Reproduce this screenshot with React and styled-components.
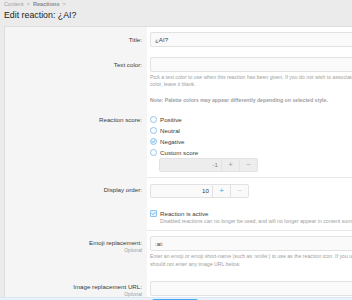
import React from 'react';
import styled, { createGlobalStyle } from 'styled-components';

const Global = createGlobalStyle`
  html, body { margin: 0; padding: 0; overflow: hidden; background: #ebebeb; }
  body { font-family: "Liberation Sans", Arial, sans-serif; color: #141414; width: 352px; height: 300px; font-size: 6px; }
  * { box-sizing: border-box; }
`;

const Page = styled.div`
  width: 620px;
  padding: 0 4px;
`;

const Header = styled.div`
  height: 26px;
  display: flex;
  flex-direction: column;
`;

const Crumbs = styled.div`
  display: flex;
  align-items: center;
  gap: 3px;
  font-size: 5.6px;
  line-height: 8px;
  color: #9a9a9a;
`;

const Crumb = styled.span`
  font-weight: ${(p) => (p.$strong ? 'bold' : 'normal')};
  color: ${(p) => (p.$strong ? '#8a8a8a' : '#a0a0a0')};
`;

const Title = styled.h1`
  margin: 0;
  font-size: 8.8px;
  font-weight: normal;
  line-height: 14px;
  color: #222;
`;

const Block = styled.div`
  background: #fff;
  border: 1px solid #dedede;
  border-right: none;
`;

const Row = styled.div`
  display: grid;
  grid-template-columns: 142px 1fr;
`;

const Label = styled.div`
  background: #f5f5f5;
  text-align: right;
  padding: ${(p) => p.$top}px 5px 0 0;
  font-size: 6.2px;
  line-height: 8px;
  color: #3a3a3a;
`;

const Optional = styled.div`
  font-size: 4.8px;
  line-height: 7px;
  color: #a0a0a0;
`;

const Value = styled.div`
  padding: ${(p) => p.$pt ?? 5}px 4px ${(p) => p.$pb ?? 5}px 3px;
  border-top: ${(p) => (p.$sep ? '1px solid #e8e8e8' : 'none')};
`;

const Input = styled.div`
  height: 15px;
  border: 1px solid #e2e2e2;
  border-radius: 2px;
  background: #fafafa;
  font-size: 6.2px;
  line-height: 13px;
  padding: 0 4px;
  color: #3a3a3a;
`;

const Hint = styled.div`
  margin-top: ${(p) => p.$mt ?? 2}px;
  padding-left: ${(p) => p.$indent ?? 0}px;
  font-size: 5.2px;
  line-height: ${(p) => p.$lh ?? 7}px;
  color: #a0a0a0;
  white-space: nowrap;
  font-weight: ${(p) => (p.$bold ? 'bold' : 'normal')};
`;

const Choice = styled.div`
  display: flex;
  align-items: center;
  height: ${(p) => p.$h ?? 11}px;
  gap: 3px;
  font-size: 6.2px;
  color: #3a3a3a;
`;

const Radio = styled.span`
  width: 7px;
  height: 7px;
  border-radius: 50%;
  border: 1px solid #8fc3ec;
  background: ${(p) => (p.$on ? '#eaf4fc' : '#fff')};
  display: flex;
  align-items: center;
  justify-content: center;
`;

const Check = styled.span`
  width: 7px;
  height: 7px;
  border-radius: 1px;
  border: 1px solid #8fc3ec;
  background: #eaf4fc;
  display: flex;
  align-items: center;
  justify-content: center;
`;

const Spin = styled.div`
  display: flex;
  width: max-content;
  height: 14px;
  margin-left: ${(p) => p.$indent ?? 0}px;
  border: 1px solid #e2e2e2;
  border-radius: 2px;
  background: ${(p) => (p.$disabled ? '#ededed' : '#fafafa')};
  font-size: 6.2px;
`;

const SpinValue = styled.div`
  width: 61px;
  text-align: right;
  padding-right: 3px;
  line-height: 12px;
  color: ${(p) => (p.$disabled ? '#8a8a8a' : '#3a3a3a')};
`;

const SpinBtn = styled.div`
  width: 18px;
  border-left: 1px solid #e2e2e2;
  display: flex;
  align-items: center;
  justify-content: center;
  font-size: 8px;
  line-height: 12px;
  color: ${(p) => p.$color};
`;

const SubmitBar = styled.div`
  position: fixed;
  left: 0;
  right: 0;
  bottom: -20px;
  height: 23px;
  background: #eaf3fb;
  border-top: 1px solid #dbe8f4;
  padding: 1px 0 0 152px;
`;

const Button = styled.div`
  width: 46px;
  height: 18px;
  border-radius: 2px;
  background: #47a7eb;
`;

const Tick = () => (
  <svg width="5" height="5" viewBox="0 0 10 10">
    <path d="M2 5.2 L4.2 7.4 L8 3" fill="none" stroke="#47a7eb" strokeWidth="1.6" strokeLinecap="round" strokeLinejoin="round" />
  </svg>
);

export default function App() {
  return (
    <>
      <Global />
      <Page>
        <Header>
          <Crumbs>
            <Crumb>Content</Crumb>
            <Crumb>&gt;</Crumb>
            <Crumb $strong>Reactions</Crumb>
            <Crumb>&gt;</Crumb>
          </Crumbs>
          <Title>Edit reaction: ¿AI?</Title>
        </Header>
        <Block>
          <Row>
            <Label $top={8.5}>Title:</Label>
            <Value>
              <Input>¿AI?</Input>
            </Value>
          </Row>
          <Row>
            <Label $top={8.5}>Text color:</Label>
            <Value>
              <Input />
              <Hint>
                Pick a text color to use when this reaction has been given. If you do not wish to associate a specific text
                <br />
                color, leave it blank.
              </Hint>
              <Hint $mt={9} $bold>Note: Palette colors may appear differently depending on selected style.</Hint>
            </Value>
          </Row>
          <Row>
            <Label $top={6.5}>Reaction score:</Label>
            <Value>
              <Choice><Radio />Positive</Choice>
              <Choice><Radio />Neutral</Choice>
              <Choice><Radio $on><Tick /></Radio>Negative</Choice>
              <Choice><Radio />Custom score</Choice>
              <Spin $disabled $indent={9}>
                <SpinValue $disabled>-1</SpinValue>
                <SpinBtn $color="#9a9a9a">+</SpinBtn>
                <SpinBtn $color="#b0b0b0">−</SpinBtn>
              </Spin>
            </Value>
          </Row>
          <Row>
            <Label $top={9}>Display order:</Label>
            <Value $sep $pt={6}>
              <Spin>
                <SpinValue>10</SpinValue>
                <SpinBtn $color="#47a7eb">+</SpinBtn>
                <SpinBtn $color="#a9d1f0">−</SpinBtn>
              </Spin>
            </Value>
          </Row>
          <Row>
            <Label $top={5} />
            <Value>
              <Choice $h={10}><Check><Tick /></Check>Reaction is active</Choice>
              <Hint $mt={0} $indent={10}>
                Disabled reactions can no longer be used, and will no longer appear in content summaries.
              </Hint>
            </Value>
          </Row>
          <Row>
            <Label $top={9}>
              Emoji replacement:
              <Optional>Optional</Optional>
            </Label>
            <Value $sep>
              <Input>:ai:</Input>
              <Hint $mt={1} $lh={8}>
                Enter an emoji or emoji short-name (such as :smile:) to use as the reaction icon. If you use an emoji, you
                <br />
                should not enter any image URL below.
              </Hint>
            </Value>
          </Row>
          <Row>
            <Label $top={10}>
              Image replacement URL:
              <Optional>Optional</Optional>
            </Label>
            <Value $pt={8}>
              <Input />
            </Value>
          </Row>
        </Block>
      </Page>
      <SubmitBar>
        <Button />
      </SubmitBar>
    </>
  );
}
